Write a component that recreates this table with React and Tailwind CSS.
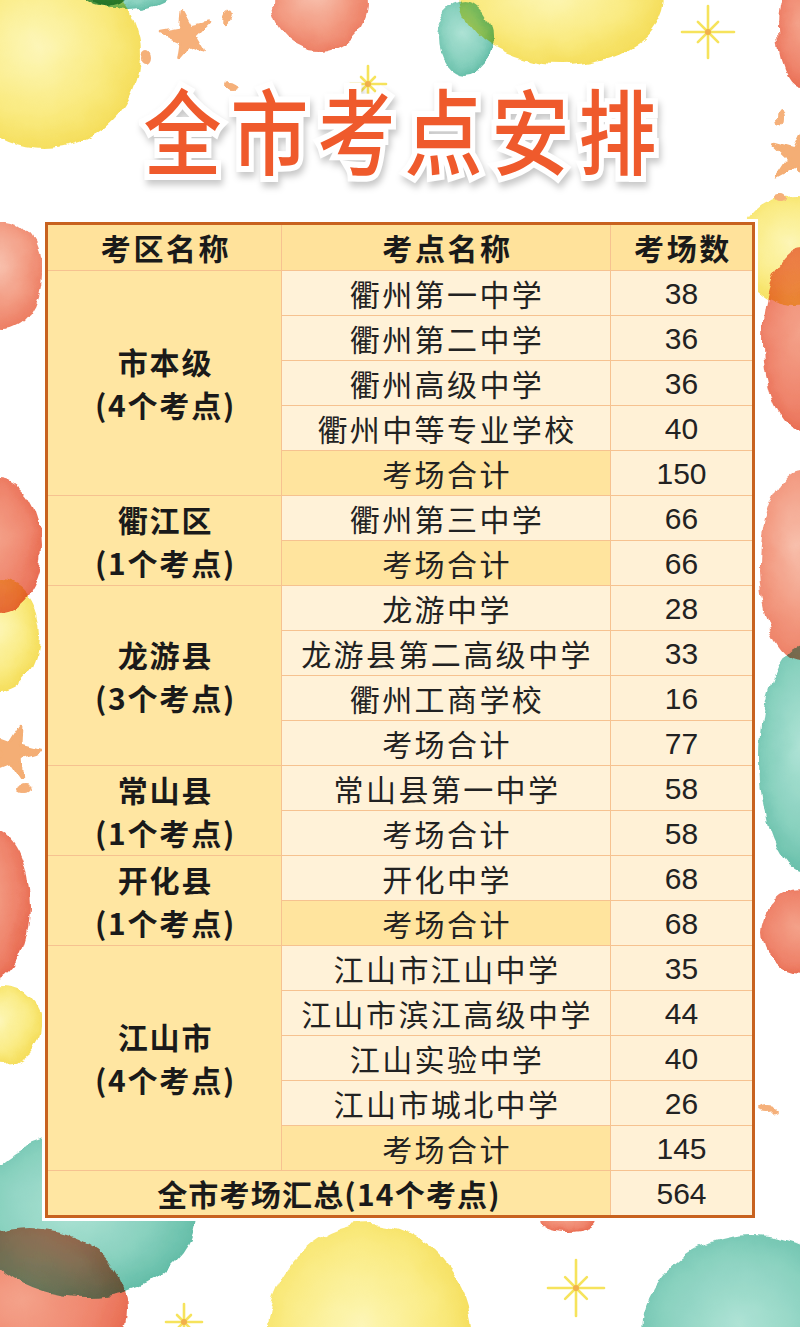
import React from 'react';

const groups = [
  { d: '市本级', c: '(4个考点)', items: [['衢州第一中学', '38'], ['衢州第二中学', '36'], ['衢州高级中学', '36'], ['衢州中等专业学校', '40']], total: '150', dark: true },
  { d: '衢江区', c: '(1个考点)', items: [['衢州第三中学', '66']], total: '66', dark: true },
  { d: '龙游县', c: '(3个考点)', items: [['龙游中学', '28'], ['龙游县第二高级中学', '33'], ['衢州工商学校', '16']], total: '77', dark: false },
  { d: '常山县', c: '(1个考点)', items: [['常山县第一中学', '58']], total: '58', dark: false },
  { d: '开化县', c: '(1个考点)', items: [['开化中学', '68']], total: '68', dark: true },
  { d: '江山市', c: '(4个考点)', items: [['江山市江山中学', '35'], ['江山市滨江高级中学', '44'], ['江山实验中学', '40'], ['江山市城北中学', '26']], total: '145', dark: true },
];

const spanClass = { 2: 'row-span-2', 4: 'row-span-4', 5: 'row-span-5' };

function starPts(cx, cy, R, r, rot = 0) {
  const p = [];
  for (let i = 0; i < 10; i++) {
    const a = rot + (i * Math.PI) / 5 - Math.PI / 2;
    const rad = i % 2 ? r : R;
    p.push(`${(cx + rad * Math.cos(a)).toFixed(1)},${(cy + rad * Math.sin(a)).toFixed(1)}`);
  }
  return p.join(' ');
}

function Sparkle({ x, y, s }) {
  const lines = [];
  for (let i = 0; i < 8; i++) {
    const a = (i * Math.PI) / 4;
    const len = i % 2 ? s * 0.55 : s;
    lines.push(
      <line key={i} x1={x} y1={y} x2={x + len * Math.sin(a)} y2={y - len * Math.cos(a)} stroke="#F6E35C" strokeWidth="2.6" strokeLinecap="round" />
    );
  }
  return (
    <g>
      {lines}
      <circle cx={x} cy={y} r="3" fill="#F2B04C" />
    </g>
  );
}

function Background() {
  const blobs = [
    { cx: 45, cy: 55, rx: 95, ry: 93, f: 'url(#gy)' },
    { cx: 128, cy: -6, rx: 42, ry: 15, f: 'url(#gt)' },
    { cx: 105, cy: -6, rx: 22, ry: 12, f: '#3E9A72' },
    { cx: 320, cy: 4, rx: 48, ry: 47, f: 'url(#gs)' },
    { cx: 562, cy: -5, rx: 103, ry: 70, f: 'url(#gy)' },
    { cx: 465, cy: 38, rx: 28, ry: 37, f: 'url(#gt)' },
    { cx: 802, cy: 30, rx: 24, ry: 58, f: 'url(#gr)' },
    { cx: 795, cy: 250, rx: 58, ry: 55, f: 'url(#gy)' },
    { cx: 802, cy: 340, rx: 40, ry: 92, f: 'url(#gr)' },
    { cx: 802, cy: 565, rx: 42, ry: 95, f: 'url(#gs)' },
    { cx: 806, cy: 758, rx: 46, ry: 115, f: 'url(#gt)' },
    { cx: 802, cy: 932, rx: 40, ry: 42, f: 'url(#gr)' },
    { cx: 4, cy: 275, rx: 38, ry: 55, f: 'url(#gs)' },
    { cx: 0, cy: 545, rx: 42, ry: 66, f: 'url(#gr)' },
    { cx: 0, cy: 635, rx: 40, ry: 56, f: 'url(#gy)' },
    { cx: -8, cy: 905, rx: 38, ry: 76, f: 'url(#gr)' },
    { cx: 4, cy: 1025, rx: 38, ry: 40, f: 'url(#gy)' },
    { cx: 85, cy: 1215, rx: 110, ry: 82, f: 'url(#gt)' },
    { cx: 30, cy: 1310, rx: 98, ry: 82, f: 'url(#gr)' },
    { cx: 370, cy: 1342, rx: 104, ry: 118, f: 'url(#gy)' },
    { cx: 568, cy: 1220, rx: 28, ry: 13, f: 'url(#gr)' },
    { cx: 752, cy: 1335, rx: 110, ry: 100, f: 'url(#gt)' },
  ];
  return (
    <svg className="absolute inset-0" width="800" height="1327" viewBox="0 0 800 1327">
      <defs>
        <radialGradient id="gy" cx="45%" cy="45%" r="60%">
          <stop offset="0" stopColor="#FDF6B2" />
          <stop offset="0.6" stopColor="#FAEA78" />
          <stop offset="1" stopColor="#F4D945" />
        </radialGradient>
        <radialGradient id="gr" cx="45%" cy="45%" r="60%">
          <stop offset="0" stopColor="#F39A80" />
          <stop offset="0.65" stopColor="#EE7A5F" />
          <stop offset="1" stopColor="#E65A3D" />
        </radialGradient>
        <radialGradient id="gs" cx="45%" cy="40%" r="60%">
          <stop offset="0" stopColor="#F8BBA6" />
          <stop offset="0.6" stopColor="#F29479" />
          <stop offset="1" stopColor="#EC7457" />
        </radialGradient>
        <radialGradient id="gt" cx="45%" cy="45%" r="60%">
          <stop offset="0" stopColor="#A8E1D2" />
          <stop offset="0.6" stopColor="#7ECDB9" />
          <stop offset="1" stopColor="#51B59D" />
        </radialGradient>
        <filter id="wc" x="-20%" y="-20%" width="140%" height="140%">
          <feTurbulence type="fractalNoise" baseFrequency="0.035" numOctaves="4" seed="5" result="n" />
          <feDisplacementMap in="SourceGraphic" in2="n" scale="12" xChannelSelector="R" yChannelSelector="G" />
        </filter>
      </defs>
      <g filter="url(#wc)">
        {blobs.map((b, i) => (
          <ellipse key={i} cx={b.cx} cy={b.cy} rx={b.rx} ry={b.ry} fill={b.f} opacity="0.92" className="mix-blend-multiply" />
        ))}
        <polygon points={starPts(187, 35, 25, 9, -0.2)} fill="#F6B07A" stroke="#F6B07A" strokeWidth="3" strokeLinejoin="round" />
        <polygon points={starPts(12, 752, 30, 10, 0.3)} fill="#F4AE74" stroke="#F4AE74" strokeWidth="3" strokeLinejoin="round" />
        <polygon points={starPts(798, 158, 28, 9, 0.2)} fill="#F4AE74" stroke="#F4AE74" strokeWidth="3" strokeLinejoin="round" />
        <ellipse cx="146" cy="58" rx="5" ry="7" fill="#F5B07A" />
        <ellipse cx="228" cy="17" rx="4" ry="9" fill="#F5B07A" transform="rotate(20 228 17)" />
        <ellipse cx="230" cy="86" rx="6" ry="4" fill="#F5B07A" />
        <ellipse cx="782" cy="118" rx="4" ry="8" fill="#F5B07A" />
        <ellipse cx="780" cy="198" rx="5" ry="4" fill="#F5B07A" />
        <ellipse cx="25" cy="790" rx="6" ry="4" fill="#F5B07A" />
        <ellipse cx="768" cy="1110" rx="8" ry="3" fill="#F5B07A" />
      </g>
      <Sparkle x={708} y={32} s={26} />
      <Sparkle x={368} y={84} s={18} />
      <Sparkle x={576} y={1288} s={28} />
      <Sparkle x={184} y={1322} s={18} />
    </svg>
  );
}

const cjk = "font-['Noto_Sans_CJK_SC',sans-serif]";
const num = "font-['Liberation_Sans',sans-serif]";
const head = `flex items-center justify-center bg-[#FFE29B] text-[30px] font-bold tracking-[2.6px] pl-[3px] text-[#1a1a1a] ${cjk}`;
const nameCell = `flex items-center justify-center text-[30px] tracking-[2.4px] pl-[2px] text-[#222] ${cjk}`;
const numCell = `flex items-center justify-center bg-[#FFF1D6] text-[30px] text-[#222] ${num}`;

export default function App() {
  const cells = [];
  cells.push(
    <div key="h1" className={head}>考区名称</div>,
    <div key="h2" className={head}>考点名称</div>,
    <div key="h3" className={head}>考场数</div>
  );
  groups.forEach((g, gi) => {
    const n = g.items.length + 1;
    cells.push(
      <div key={`d${gi}`} className={`${spanClass[n]} flex flex-col items-center justify-center bg-[#FFE6A2] text-[30px] font-bold leading-[43px] tracking-[1.8px] pl-[2px] text-[#1a1a1a] ${cjk}`}>
        <span>{g.d}</span>
        <span>{g.c}</span>
      </div>
    );
    g.items.forEach(([name, v], ii) => {
      cells.push(
        <div key={`n${gi}-${ii}`} className={`${nameCell} bg-[#FFF2D8]`}>{name}</div>,
        <div key={`v${gi}-${ii}`} className={numCell}>{v}</div>
      );
    });
    cells.push(
      <div key={`t${gi}`} className={`${nameCell} ${g.dark ? 'bg-[#FFE49E]' : 'bg-[#FFF2D8]'}`}>考场合计</div>,
      <div key={`tv${gi}`} className={numCell}>{g.total}</div>
    );
  });
  cells.push(
    <div key="sum" className={`col-span-2 flex items-center justify-center bg-[#FFE6A2] text-[30px] font-bold tracking-[1.2px] text-[#1a1a1a] ${cjk}`}>全市考场汇总(14个考点)</div>,
    <div key="sumv" className={numCell}>564</div>
  );

  return (
    <div className="relative w-[800px] h-[1327px] overflow-hidden bg-white">
      <Background />
      <div className="relative flex flex-col items-center">
        <div className="h-[219px] w-full flex items-start justify-center pt-[88px]">
          <h1 className={`text-[78px] leading-none font-medium tracking-[9px] pl-[9px] text-[#EF5A2C] scale-y-[1.2] [-webkit-text-stroke:10px_white] [paint-order:stroke_fill] drop-shadow-[2px_4px_3px_rgba(0,0,0,0.22)] ${cjk}`}>
            全市考点安排
          </h1>
        </div>
        <div className="bg-white p-[3px]">
          <div className="border-[3px] border-[#C8621F]">
            <div className="grid grid-cols-[233px_328px_141px] grid-rows-[45px_repeat(21,44px)] gap-px bg-[#F6C290]">
              {cells}
            </div>
          </div>
        </div>
      </div>
    </div>
  );
}
